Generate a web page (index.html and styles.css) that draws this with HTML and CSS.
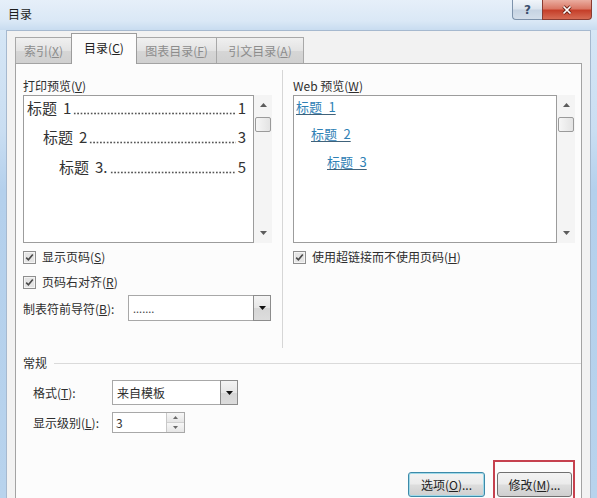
FILE: index.html
```html
<!DOCTYPE html>
<html lang="zh-CN">
<head>
<meta charset="utf-8">
<title>目录</title>
<link rel="stylesheet" href="styles.css">
</head>
<body>
<div class="window">
  <div class="titlebar">
    <span class="title">目录</span>
    <div class="caption">
      <span class="cap-help">?</span>
      <span class="cap-close">
        <svg width="12" height="10" viewBox="0 0 12 10"><path d="M2.5 1.5 9.5 8.5M9.5 1.5 2.5 8.5" stroke="#6e2519" stroke-width="3.4" fill="none"/><path d="M2.5 1.5 9.5 8.5M9.5 1.5 2.5 8.5" stroke="#fff" stroke-width="1.7" fill="none"/></svg>
      </span>
    </div>
  </div>

  <div class="client">
    <div class="tabs">
      <div class="tab w1">索引(<u>X</u>)</div>
      <div class="tab w2 active">目录(<u>C</u>)</div>
      <div class="tab w3">图表目录(<u>F</u>)</div>
      <div class="tab w4">引文目录(<u>A</u>)</div>
    </div>

    <div class="panel">
      <div class="top">
        <div class="col">
          <div class="label">打印预览(<u>V</u>)</div>
          <div class="preview">
            <div class="box print">
              <div class="toc-row lvl1"><span>标题<span class="n">1</span></span><span class="leader"></span><span>1</span></div>
              <div class="toc-row lvl2"><span>标题<span class="n">2</span></span><span class="leader"></span><span>3</span></div>
              <div class="toc-row lvl3"><span>标题<span class="n">3.</span></span><span class="leader"></span><span>5</span></div>
            </div>
            <div class="scroll">
              <div class="arrow up"><svg width="7" height="4" viewBox="0 0 7 4"><path d="M0 4h7L3.5 0z" fill="#5c5c5c"/></svg></div>
              <div class="thumb"></div>
              <div class="track"></div>
              <div class="arrow down"><svg width="7" height="4" viewBox="0 0 7 4"><path d="M0 0h7L3.5 4z" fill="#5c5c5c"/></svg></div>
            </div>
          </div>
          <div class="check c1">
            <svg class="cb" width="13" height="13" viewBox="0 0 13 13"><rect x="0.5" y="0.5" width="12" height="12" fill="#f4f4f4" stroke="#8e8e8e"/><rect x="2" y="2" width="9" height="9" fill="#e4e4e4"/><path d="M3.2 6.6 5.4 8.8 9.8 3.4" fill="none" stroke="#4a4a4a" stroke-width="1.6"/></svg>
            <span>显示页码(<u>S</u>)</span>
          </div>
          <div class="check c2">
            <svg class="cb" width="13" height="13" viewBox="0 0 13 13"><rect x="0.5" y="0.5" width="12" height="12" fill="#f4f4f4" stroke="#8e8e8e"/><rect x="2" y="2" width="9" height="9" fill="#e4e4e4"/><path d="M3.2 6.6 5.4 8.8 9.8 3.4" fill="none" stroke="#4a4a4a" stroke-width="1.6"/></svg>
            <span>页码右对齐(<u>R</u>)</span>
          </div>
          <div class="leader-row">
            <span class="leader-label">制表符前导符(<u>B</u>):</span>
            <div class="select sel-leader">
              <span class="val dots">.......</span>
              <span class="drop"><svg width="7" height="4" viewBox="0 0 7 4"><path d="M0 0h7L3.5 4z" fill="#111"/></svg></span>
            </div>
          </div>
        </div>

        <div class="sep"></div>

        <div class="col">
          <div class="label">Web 预览(<u>W</u>)</div>
          <div class="preview">
            <div class="box web">
              <div class="web-row lvl1"><span class="link">标题&ensp;1</span></div>
              <div class="web-row lvl2"><span class="link">标题&ensp;2</span></div>
              <div class="web-row lvl3"><span class="link">标题&ensp;3</span></div>
            </div>
            <div class="scroll">
              <div class="arrow up"><svg width="7" height="4" viewBox="0 0 7 4"><path d="M0 4h7L3.5 0z" fill="#5c5c5c"/></svg></div>
              <div class="thumb"></div>
              <div class="track"></div>
              <div class="arrow down"><svg width="7" height="4" viewBox="0 0 7 4"><path d="M0 0h7L3.5 4z" fill="#5c5c5c"/></svg></div>
            </div>
          </div>
          <div class="check c1">
            <svg class="cb" width="13" height="13" viewBox="0 0 13 13"><rect x="0.5" y="0.5" width="12" height="12" fill="#f4f4f4" stroke="#8e8e8e"/><rect x="2" y="2" width="9" height="9" fill="#e4e4e4"/><path d="M3.2 6.6 5.4 8.8 9.8 3.4" fill="none" stroke="#4a4a4a" stroke-width="1.6"/></svg>
            <span>使用超链接而不使用页码(<u>H</u>)</span>
          </div>
        </div>
      </div>

      <div class="general">
        <div class="group-head">常规</div>
        <div class="field f1">
          <span class="field-label">格式(<u>T</u>):</span>
          <div class="select sel-format">
            <span class="val">来自模板</span>
            <span class="drop"><svg width="7" height="4" viewBox="0 0 7 4"><path d="M0 0h7L3.5 4z" fill="#111"/></svg></span>
          </div>
        </div>
        <div class="field f2">
          <span class="field-label">显示级别(<u>L</u>):</span>
          <div class="spin">
            <span class="val">3</span>
            <span class="spin-btns">
              <span class="sb"><svg width="5" height="3" viewBox="0 0 5 3"><path d="M0 3h5L2.5 0z" fill="#6a6a6a"/></svg></span>
              <span class="sb"><svg width="5" height="3" viewBox="0 0 5 3"><path d="M0 0h5L2.5 3z" fill="#6a6a6a"/></svg></span>
            </span>
          </div>
        </div>
      </div>

      <div class="actions">
        <button class="btn default">选项(<u>O</u>)...</button>
        <span class="mark"><button class="btn">修改(<u>M</u>)...</button></span>
      </div>
    </div>
  </div>
</div>
</body>
</html>
```

FILE: styles.css
```css
html, body {
  margin: 0;
  padding: 0;
}

body {
  width: 597px;
  height: 498px;
  overflow: hidden;
  font-family: "Noto Sans CJK SC", "Noto Sans", sans-serif;
  font-size: 12px;
  color: #2e2e2e;
}

u {
  text-decoration: underline;
  text-underline-offset: 1px;
}

/* window frame */
.window {
  height: 498px;
  display: flex;
  flex-direction: column;
  background: linear-gradient(180deg, #e0ecf8 0, #d4e5f5 40px, #cadef2 130px, #b4d0ec 190px, #b8d3ed 100%);
  overflow: hidden;
}

.titlebar {
  height: 30px;
  flex: none;
  display: flex;
  justify-content: space-between;
  align-items: flex-start;
  padding: 0 5px 0 8px;
  background: linear-gradient(180deg, #e6eff9 0, #dae8f6 70%, #c8dcf0 100%);
}

.title {
  margin-top: 6px;
  line-height: 16px;
  color: #1c1c1c;
}

.caption {
  display: flex;
}

.cap-help {
  width: 30px;
  height: 20px;
  box-sizing: border-box;
  border: 1px solid #7d92ab;
  border-top: 0;
  border-right: 0;
  border-radius: 0 0 0 4px;
  background: linear-gradient(180deg, #f1f5fa 0, #dbe4ee 48%, #c6d3e2 52%, #d3deea 100%);
  display: flex;
  align-items: center;
  justify-content: center;
  font: bold 12px "DejaVu Sans", sans-serif;
  color: #3a4f6c;
}

.cap-close {
  width: 50px;
  height: 20px;
  box-sizing: border-box;
  border: 1px solid #8a3b31;
  border-top: 0;
  border-radius: 0 0 4px 0;
  background: linear-gradient(180deg, #eaada0 0, #da7866 45%, #c53f2a 55%, #d66c55 100%);
  display: flex;
  align-items: center;
  justify-content: center;
}

/* client area */
.client {
  flex: 1;
  display: flex;
  flex-direction: column;
  margin: 0 6px;
  padding: 2px 8px 0 8px;
  background: #f2f2f2;
  border: 1px solid #a6b9cf;
  border-bottom: 0;
}

.tabs {
  height: 31px;
  display: flex;
  align-items: flex-end;
  margin-bottom: -1px;
  position: relative;
  z-index: 1;
}

.tab {
  height: 26px;
  margin-bottom: 1px;
  margin-right: -1px;
  box-sizing: border-box;
  border: 1px solid #a8a8a8;
  border-bottom: 0;
  background: linear-gradient(180deg, #f0f0f0 0, #e3e3e3 50%, #d6d6d6 51%, #d0d0d0 100%);
  color: #8c8c8c;
  display: flex;
  align-items: center;
  justify-content: center;
  line-height: 16px;
}

.tab.w1 { width: 57px; }
.tab.w2 { width: 66px; }
.tab.w3 { width: 81px; }
.tab.w4 { width: 88px; }

.tab.active {
  height: 31px;
  margin-bottom: 0;
  background: #fcfcfc;
  color: #222;
  border-color: #9c9c9c;
  position: relative;
  z-index: 2;
  padding-bottom: 3px;
}

.panel {
  flex: 1;
  background: #fcfcfc;
  border: 1px solid #a3a3a3;
  border-bottom: 0;
  padding: 14px 6px 0 7px;
}

/* upper two columns */
.top {
  display: grid;
  grid-template-columns: 249px 21px 282px;
  height: 270px;
}

.sep {
  margin: -8px 0 0 10px;
  border-left: 1px solid #d6d6d6;
}

.label {
  line-height: 16px;
}

.preview {
  display: flex;
  height: 148px;
  margin-top: 1px;
}

.box {
  flex: 1;
  box-sizing: border-box;
  border: 1px solid #9c9c9c;
  background: #fff;
}

.scroll {
  width: 18px;
  display: flex;
  flex-direction: column;
  background: #f4f4f4;
}

.arrow {
  display: flex;
  align-items: center;
  justify-content: center;
}

.arrow.up { height: 20px; }
.arrow.down { height: 20px; }

.thumb {
  height: 15px;
  margin: 2px 1px 0 1px;
  box-sizing: border-box;
  border: 1px solid #9a9a9a;
  border-radius: 2px;
  background: linear-gradient(90deg, #f6f6f6, #e3e3e3);
}

.track { flex: 1; }

/* print preview */
.print {
  padding-right: 7px;
}

.toc-row {
  display: flex;
  height: 24px;
  line-height: 24px;
  font-size: 15px;
  color: #333;
}

.toc-row .n { margin-left: 6px; }

.toc-row.lvl1 { padding-left: 3px; }
.toc-row.lvl2 { padding-left: 19px; margin-top: 5px; }
.toc-row.lvl3 { padding-left: 35px; margin-top: 6px; }

.leader {
  flex: 1;
  margin: 0 2px;
  background-image: radial-gradient(circle at center, #555 0, #555 0.8px, transparent 1.2px);
  background-size: 3.4px 3px;
  background-repeat: repeat-x;
  background-position: 0 16px;
}

/* web preview */
.web {
  padding-top: 1px;
}

.web-row {
  height: 20px;
  line-height: 20px;
  font-size: 13px;
}

.web-row.lvl1 { padding-left: 2px; }
.web-row.lvl2 { padding-left: 17px; margin-top: 7px; }
.web-row.lvl3 { padding-left: 33px; margin-top: 8px; }

.link {
  color: #2f81b5;
  text-decoration: underline;
  text-decoration-color: #40627a;
  text-underline-offset: 2px;
}

/* checkboxes */
.check {
  display: flex;
  align-items: center;
  gap: 6px;
  height: 16px;
  line-height: 16px;
}

.check.c1 { margin-top: 6px; }
.check.c2 { margin-top: 9px; }

.cb { flex: none; }

/* combo boxes */
.leader-row {
  display: flex;
  align-items: center;
  margin-top: 5px;
}

.leader-label { width: 105px; }

.select {
  display: flex;
  box-sizing: border-box;
  border: 1px solid #a8a8a8;
  background: #fff;
}

.select .val {
  flex: 1;
  padding-left: 4px;
}

.select .drop {
  width: 18px;
  box-sizing: border-box;
  border: 1px solid #8c8c8c;
  margin: -1px -1px -1px 0;
  background: linear-gradient(180deg, #f4f4f4 0, #e6e6e6 50%, #d6d6d6 51%, #dcdcdc 100%);
  display: flex;
  align-items: center;
  justify-content: center;
}

.sel-leader {
  width: 143px;
  height: 26px;
  line-height: 24px;
}

.dots {
  letter-spacing: 0;
  font-size: 11px;
  color: #444;
}

.sel-format {
  width: 126px;
  height: 25px;
  line-height: 23px;
}

/* general group */
.general {
  margin-top: 7px;
}

.group-head {
  display: flex;
  align-items: center;
  line-height: 16px;
  height: 16px;
}

.group-head::after {
  content: "";
  flex: 1;
  margin-left: 7px;
  margin-right: -6px;
  border-top: 1px solid #dadada;
}

.field {
  display: flex;
  align-items: center;
  padding-left: 10px;
}

.field.f1 { margin-top: 9px; }
.field.f2 { margin-top: 7px; }

.field-label { width: 79px; }

.spin {
  display: flex;
  width: 73px;
  height: 21px;
  box-sizing: border-box;
  border: 1px solid #a8a8a8;
  background: #fff;
  line-height: 19px;
}

.spin .val {
  flex: 1;
  padding-left: 3px;
}

.spin-btns {
  width: 17px;
  display: flex;
  flex-direction: column;
  border-left: 1px solid #c8c8c8;
}

.sb {
  flex: 1;
  display: flex;
  align-items: center;
  justify-content: center;
  background: linear-gradient(180deg, #f7f7f7, #e6e6e6);
}

.sb + .sb { border-top: 1px solid #d0d0d0; }

/* dialog buttons */
.actions {
  display: flex;
  justify-content: flex-end;
  gap: 12px;
  margin-top: 39px;
  padding-right: 3px;
}

.btn {
  height: 25px;
  box-sizing: border-box;
  border: 1px solid #707070;
  border-radius: 3px;
  background: linear-gradient(180deg, #f3f3f3 0, #ebebeb 48%, #dddddd 52%, #cfcfcf 100%);
  font-family: "Noto Sans CJK SC", "Noto Sans", sans-serif;
  font-size: 12px;
  color: #222;
  padding: 0;
  line-height: 23px;
}

.btn.default {
  width: 77px;
  border-color: #3d8aa9;
  box-shadow: inset 0 0 0 1px #9fd9e8;
}

.mark {
  position: relative;
  display: flex;
}

.mark .btn { width: 75px; }

/* red highlight drawn around the modify button */
.mark::before {
  content: "";
  position: absolute;
  left: -4px;
  top: -12px;
  right: -3px;
  bottom: -8px;
  border: 2px solid #c6414e;
  pointer-events: none;
}
```
